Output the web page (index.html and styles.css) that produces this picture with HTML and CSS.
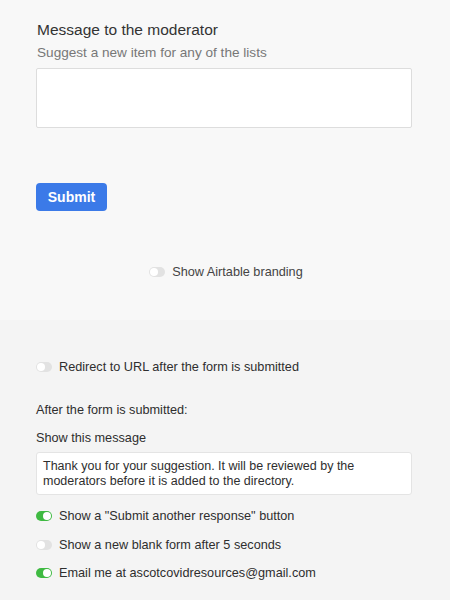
FILE: index.html
```html
<!DOCTYPE html>
<html lang="en">
  <head>
    <meta charset="UTF-8" />
    <meta name="viewport" content="width=device-width, initial-scale=1.0" />
    <title>Form settings</title>
    <link rel="stylesheet" href="styles.css">
  </head>
  <body>
    <section class="form-preview">
      <div class="field">
        <h3 class="field-title">Message to the moderator</h3>
        <p class="field-help">Suggest a new item for any of the lists</p>
        <textarea class="field-input"></textarea>
      </div>

      <button type="button" class="submit-btn">Submit</button>

      <div class="branding">
        <span class="toggle"></span>
        <span>Show Airtable branding</span>
      </div>
    </section>

    <section class="settings">
      <div class="option redirect">
        <span class="toggle"></span>
        <span>Redirect to URL after the form is submitted</span>
      </div>

      <p class="after-label">After the form is submitted:</p>
      <p class="message-label">Show this message</p>
      <div class="message-box">
        Thank you for your suggestion. It will be reviewed by the moderators before it is added to the directory.
      </div>

      <div class="option">
        <span class="toggle on"></span>
        <span>Show a "Submit another response" button</span>
      </div>
      <div class="option">
        <span class="toggle"></span>
        <span>Show a new blank form after 5 seconds</span>
      </div>
      <div class="option">
        <span class="toggle on"></span>
        <span>Email me at ascotcovidresources@gmail.com</span>
      </div>
    </section>
  </body>
</html>
```

FILE: styles.css
```css
body {
  font-family: "Liberation Sans", Arial, sans-serif;
  margin: 0;
  padding: 0;
  color: #333;
  background-color: #f4f4f4;
}

.form-preview {
  background-color: #f8f8f8;
  padding: 20px 38px 0 36px;
  height: 300px;
}

.field-title {
  margin: 0 0 0 1px;
  font-size: 15.5px;
  font-weight: normal;
  line-height: 19px;
  color: #333;
}

.field-help {
  margin: 5px 0 0 1px;
  font-size: 13.6px;
  line-height: 17px;
  color: #777;
}

.field-input {
  display: block;
  box-sizing: border-box;
  width: 100%;
  height: 60px;
  margin-top: 7px;
  background-color: #fff;
  border: 1px solid #ddd;
  border-radius: 2px;
  resize: none;
}

.submit-btn {
  display: block;
  margin-top: 55px;
  width: 71px;
  height: 28px;
  padding: 0;
  background-color: #3b7ae8;
  color: white;
  border: none;
  border-radius: 4px;
  font-family: inherit;
  font-size: 14px;
  font-weight: bold;
}

.branding {
  display: flex;
  align-items: center;
  justify-content: center;
  gap: 7px;
  margin-top: 54px;
  margin-left: 4px;
  font-size: 12.7px;
  color: #444;
}

.toggle {
  display: inline-block;
  position: relative;
  width: 16px;
  height: 10px;
  border-radius: 5px;
  background-color: #e2e2e2;
  flex-shrink: 0;
}

.toggle::after {
  content: "";
  position: absolute;
  top: 1px;
  left: 1px;
  width: 8px;
  height: 8px;
  border-radius: 50%;
  background-color: #fff;
}

.toggle.on {
  background-color: #3fba42;
}

.toggle.on::after {
  left: 7px;
}

.settings {
  padding: 39px 38px 0 36px;
  font-size: 12.7px;
  color: #2e2e2e;
}

.option {
  display: flex;
  align-items: center;
  gap: 7px;
  height: 16px;
  margin-bottom: 12.5px;
}

.redirect {
  margin-bottom: 0;
}

.after-label {
  margin: 27px 0 0 0;
  line-height: 16px;
}

.message-label {
  margin: 12px 0 0 0;
  line-height: 16px;
  font-weight: 500;
}

.message-box {
  margin: 6px 0 13px 0;
  padding: 6px 7px 6px 6px;
  background-color: #fff;
  border: 1px solid #e4e4e4;
  border-radius: 3px;
  font-size: 12.5px;
  line-height: 14.5px;
}
```
